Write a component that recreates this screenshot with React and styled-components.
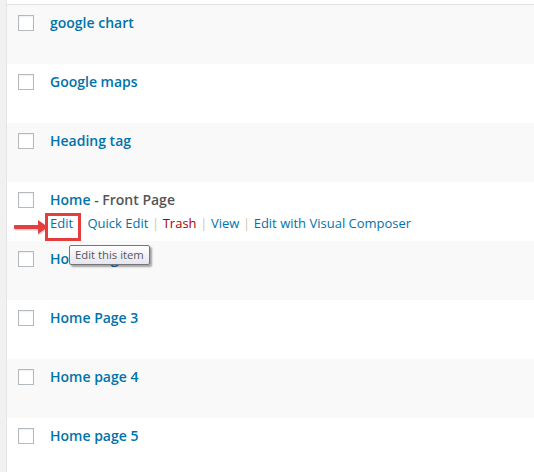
import React from "react";
import styled, { createGlobalStyle } from "styled-components";

const GlobalStyle = createGlobalStyle`
  html, body { margin: 0; padding: 0; background: #fff; }
  body { font-family: "Open Sans", "Liberation Sans", sans-serif; }
`;

const Page = styled.div`
  display: flex;
  width: 534px;
  height: 472px;
  overflow: hidden;
  background: #fff;
`;

const SideStrip = styled.div`
  width: 6px;
  flex: none;
  background: #f1f1f1;
  border-right: 1px solid #e5e5e5;
`;

const Main = styled.div`
  flex: 1;
  padding-top: 4px;
`;

const List = styled.div`
  border-top: 1px solid #e1e1e1;
`;

const Row = styled.div`
  position: relative;
  z-index: ${(p) => (p.$raised ? 2 : 1)};
  display: flex;
  height: 59px;
  box-sizing: border-box;
  padding: 10px 0 0 11px;
  background: ${(p) => (p.$alt ? "#f9f9f9" : "#fff")};
`;

const Check = styled.input.attrs({ type: "checkbox" })`
  appearance: none;
  -webkit-appearance: none;
  margin: 0;
  width: 16px;
  height: 16px;
  box-sizing: border-box;
  border: 1px solid #b4b9be;
  background: #fff;
  box-shadow: inset 0 1px 2px rgba(0, 0, 0, 0.07);
  flex: none;
`;

const Content = styled.div`
  margin-left: 16px;
  margin-top: -2px;
`;

const Title = styled.div`
  font-size: 14px;
  font-weight: 600;
  line-height: 19px;
  color: #555;
`;

const TitleLink = styled.span`
  color: #0073aa;
`;

const Actions = styled.div`
  padding-top: 5px;
  font-size: 13px;
  line-height: 18px;
  white-space: nowrap;
`;

const ActionLink = styled.span`
  color: ${(p) => (p.$danger ? "#a00" : "#0073aa")};
`;

const Sep = styled.span`
  color: #d6bfb2;
  margin: 0 3.6px;
`;

const Highlight = styled.div`
  position: absolute;
  left: 38px;
  top: 31px;
  width: 36px;
  height: 28px;
  box-sizing: border-box;
  border: 3px solid #e43d3d;
`;

const Arrow = styled.svg`
  position: absolute;
  left: 7px;
  top: 38px;
  overflow: visible;
`;

const Tooltip = styled.div`
  position: absolute;
  left: 62px;
  top: 63px;
  padding: 2px 5px 2px;
  border: 1px solid #767676;
  border-radius: 2px;
  background: linear-gradient(#ffffff, #e4e5f0);
  box-shadow: 2px 2px 2px rgba(0, 0, 0, 0.35);
  font-family: "Open Sans", "Liberation Sans", sans-serif;
  font-size: 11.3px;
  line-height: 14px;
  color: #575757;
  white-space: nowrap;
`;

const rows = [
  { title: "google chart" },
  { title: "Google maps" },
  { title: "Heading tag" },
  { title: "Home", state: " - Front Page", active: true },
  { title: "Home Page 2" },
  { title: "Home Page 3" },
  { title: "Home page 4" },
  { title: "Home page 5" },
];

export default function App() {
  return (
    <>
      <GlobalStyle />
      <Page>
        <SideStrip />
        <Main>
          <List>
            {rows.map((r, i) => (
              <Row key={r.title} $alt={i % 2 === 0} $raised={r.active}>
                <Check readOnly />
                <Content>
                  <Title>
                    <TitleLink>{r.title}</TitleLink>
                    {r.state}
                  </Title>
                  {r.active && (
                    <Actions>
                      <ActionLink>Edit</ActionLink>
                      <Sep>|</Sep>
                      <ActionLink>Quick Edit</ActionLink>
                      <Sep>|</Sep>
                      <ActionLink $danger>Trash</ActionLink>
                      <Sep>|</Sep>
                      <ActionLink>View</ActionLink>
                      <Sep>|</Sep>
                      <ActionLink>Edit with Visual Composer</ActionLink>
                    </Actions>
                  )}
                </Content>
                {r.active && (
                  <>
                    <Arrow width="34" height="14" viewBox="0 0 34 14">
                      <g transform="translate(0.5 1.5)" fill="rgba(0,0,0,0.18)">
                        <rect x="0" y="5" width="26" height="4" rx="1" />
                        <polygon points="24,0 34,7 24,14" />
                      </g>
                      <g fill="#e53e3e">
                        <rect x="0" y="5" width="26" height="4" rx="1" />
                        <polygon points="24,0 34,7 24,14" />
                      </g>
                    </Arrow>
                    <Highlight />
                    <Tooltip>Edit this item</Tooltip>
                  </>
                )}
              </Row>
            ))}
          </List>
        </Main>
      </Page>
    </>
  );
}
